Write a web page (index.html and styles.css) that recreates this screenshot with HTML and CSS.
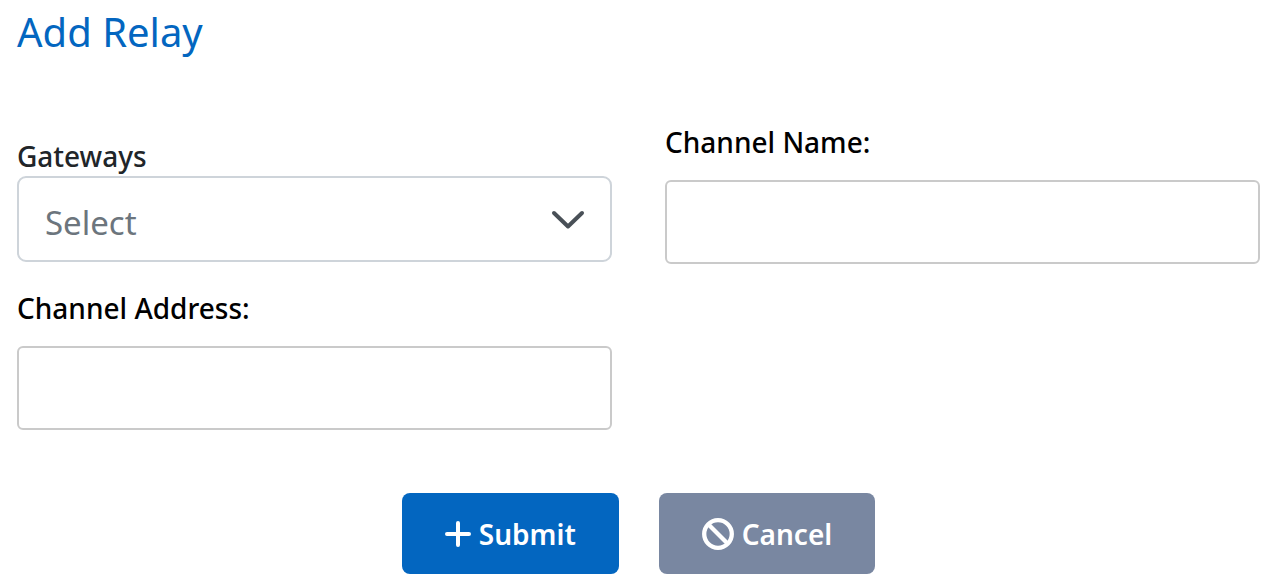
FILE: index.html
```html
<!DOCTYPE html>
<html lang="en">
<head>
<meta charset="utf-8">
<title>Add Relay</title>
<link rel="stylesheet" href="styles.css">
</head>
<body>
<main class="page">
<h1 class="title">Add Relay</h1>
<form class="form">
<div class="fields">
<div class="field field-select">
<label class="label label-select" for="gateways">Gateways</label>
<div class="select-wrap">
<select class="control select" id="gateways"><option>Select</option></select>
<svg class="chevron" viewBox="0 0 34 20" aria-hidden="true"><path d="M3 3 17 16.500 31 3"/></svg>
</div>
</div>
<div class="field">
<label class="label" for="channel-name">Channel Name:</label>
<input class="control input" id="channel-name" type="text">
</div>
<div class="field">
<label class="label" for="channel-address">Channel Address:</label>
<input class="control input" id="channel-address" type="text">
</div>
</div>
<div class="actions">
<button class="button submit" type="submit"><svg class="plus" viewBox="0 0 26 26" aria-hidden="true"><path d="M13 2V24M2 13H24"/></svg>Submit</button>
<button class="button cancel" type="button"><svg class="ban" viewBox="0 0 32 32" aria-hidden="true"><circle cx="16" cy="16" r="13.800"/><path d="M6 6 26 26"/></svg>Cancel</button>
</div>
</form>
</main>
</body>
</html>
```
FILE: styles.css
```css
* { box-sizing: border-box; }
body { margin: 0; background: #fff; font-family: "Segoe UI", "Noto Sans", "Open Sans", sans-serif; }
.page { padding: 8px 17px 10px; }
.title { margin: 0; color: #0366c0; font-size: 40px; line-height: 48px; font-weight: 400; }
.fields { display: grid; grid-template-columns: 1fr 1fr; column-gap: 53px; row-gap: 24px; padding-top: 66px; }
.field { display: flex; flex-direction: column; gap: 18px; }
.field-select { gap: 0; padding-top: 14px; }
.label { color: #000; font-size: 28px; line-height: 40px; font-weight: 500; }
.label-select { color: #212529; }
.control { display: block; width: 100%; height: 84px; border: 2px solid #cacaca; border-radius: 6px; background: #fff; font-family: inherit; }
.input { padding: 0 26px; font-size: 28px; }
.select-wrap { position: relative; }
.select { appearance: none; height: 86px; padding: 6px 26px 0; border-color: #ced4da; border-radius: 9px; color: #6c757d; font-size: 33px; }
.chevron { position: absolute; top: 34px; right: 27px; width: 34px; height: 20px; fill: none; stroke: #495057; stroke-width: 4; stroke-linecap: round; stroke-linejoin: round; pointer-events: none; }
.actions { display: flex; justify-content: center; gap: 40px; padding-top: 63px; }
.button { display: flex; align-items: center; justify-content: center; gap: 8px; height: 81px; padding: 0 43px; border: 0; border-radius: 8px; color: #fff; font-family: inherit; font-size: 28px; font-weight: 600; }
.submit { background: #0366c0; }
.cancel { background: #7987a1; }
.plus { width: 26px; height: 26px; fill: none; stroke: #fff; stroke-width: 4; stroke-linecap: round; }
.ban { width: 32px; height: 32px; fill: none; stroke: #fff; stroke-width: 4.300; }
```
